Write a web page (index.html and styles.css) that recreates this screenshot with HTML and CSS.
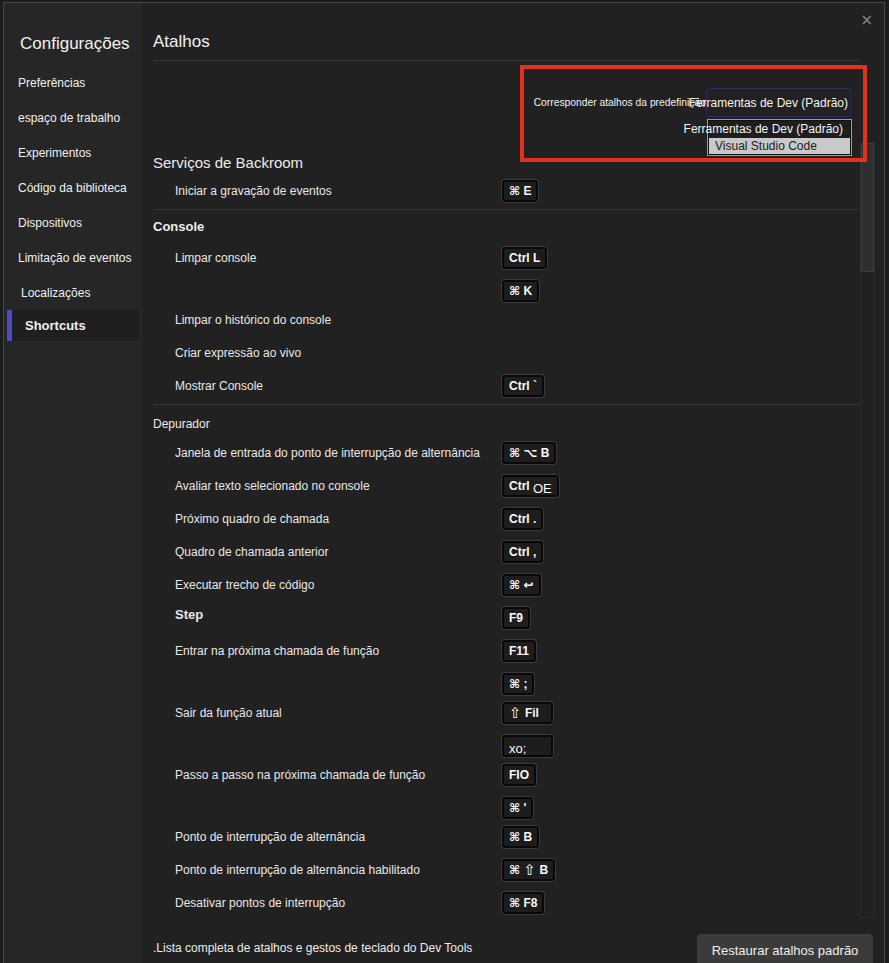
FILE: index.html
```html
<!DOCTYPE html>
<html lang="pt">
<head>
<meta charset="utf-8">
<title>Configurações - Atalhos</title>
<link rel="stylesheet" href="styles.css">
</head>
<body>
<div class="frame">
  <aside class="sidebar">
    <h1 class="side-title">Configurações</h1>
    <nav class="side-nav">
      <a class="side-item">Preferências</a>
      <a class="side-item">espaço de trabalho</a>
      <a class="side-item">Experimentos</a>
      <a class="side-item">Código da biblioteca</a>
      <a class="side-item">Dispositivos</a>
      <a class="side-item">Limitação de eventos</a>
      <a class="side-item shifted">Localizações</a>
      <a class="side-item active">Shortcuts</a>
    </nav>
  </aside>

  <main class="main">
    <button class="close" aria-label="Fechar">×</button>
    <header class="main-header"><h2 class="main-title">Atalhos</h2></header>

    <div class="body">
      <div class="scroll">
        <div class="preset">
          <span class="preset-label">Corresponder atalhos da predefinição</span>
          <div class="select">
            <span class="select-value">Ferramentas de Dev (Padrão)</span>
            <ul class="options">
              <li class="option current"><span>Ferramentas de Dev (Padrão)</span></li>
              <li class="option hover">Visual Studio Code</li>
            </ul>
          </div>
        </div>

        <section class="group">
          <h3 class="group-title backroom">Serviços de Backroom</h3>
          <div class="item"><span class="label">Iniciar a gravação de eventos</span><div class="keys"><kbd class="key">⌘ E</kbd></div></div>
        </section>

        <section class="group">
          <h3 class="group-title console">Console</h3>
          <div class="item multi"><span class="label">Limpar console</span><div class="keys"><kbd class="key">Ctrl L</kbd><kbd class="key">⌘ K</kbd></div></div>
          <div class="item"><span class="label">Limpar o histórico do console</span><div class="keys"></div></div>
          <div class="item"><span class="label">Criar expressão ao vivo</span><div class="keys"></div></div>
          <div class="item"><span class="label">Mostrar Console</span><div class="keys"><kbd class="key">Ctrl `</kbd></div></div>
        </section>

        <section class="group last">
          <h3 class="group-title debugger">Depurador</h3>
          <div class="item"><span class="label">Janela de entrada do ponto de interrupção de alternância</span><div class="keys"><kbd class="key">⌘ ⌥ B</kbd></div></div>
          <div class="item"><span class="label">Avaliar texto selecionado no console</span><div class="keys"><kbd class="key">Ctrl <span class="odd">OE</span></kbd></div></div>
          <div class="item"><span class="label">Próximo quadro de chamada</span><div class="keys"><kbd class="key">Ctrl .</kbd></div></div>
          <div class="item"><span class="label">Quadro de chamada anterior</span><div class="keys"><kbd class="key">Ctrl ,</kbd></div></div>
          <div class="item"><span class="label">Executar trecho de código</span><div class="keys"><kbd class="key">⌘ ↩</kbd></div></div>
          <div class="item"><span class="label strong">Step</span><div class="keys"><kbd class="key">F9</kbd></div></div>
          <div class="item multi"><span class="label">Entrar na próxima chamada de função</span><div class="keys"><kbd class="key">F11</kbd><kbd class="key">⌘ ;</kbd></div></div>
          <div class="item multi"><span class="label">Sair da função atual</span><div class="keys"><kbd class="key wide"><span class="sym">⇧</span> Fil</kbd><kbd class="key wide"><span class="low">xo;</span></kbd></div></div>
          <div class="item multi"><span class="label">Passo a passo na próxima chamada de função</span><div class="keys"><kbd class="key">FIO</kbd><kbd class="key">⌘ '</kbd></div></div>
          <div class="item"><span class="label">Ponto de interrupção de alternância</span><div class="keys"><kbd class="key">⌘ B</kbd></div></div>
          <div class="item"><span class="label">Ponto de interrupção de alternância habilitado</span><div class="keys"><kbd class="key">⌘ <span class="sym">⇧</span> B</kbd></div></div>
          <div class="item"><span class="label">Desativar pontos de interrupção</span><div class="keys"><kbd class="key">⌘ F8</kbd></div></div>
        </section>
      </div>
      <div class="scrollbar"><div class="thumb"></div></div>
    </div>

    <footer class="footer">
      <span class="footer-link">.Lista completa de atalhos e gestos de teclado do Dev Tools</span>
      <button class="restore">Restaurar atalhos padrão</button>
    </footer>

    <div class="annotation"></div>
  </main>
</div>
</body>
</html>
```

FILE: styles.css
```css
html, body {
  margin: 0;
  height: 963px;
  overflow: hidden;
}

body {
  background: #1c1c1c;
  font-family: "Liberation Sans", Arial, "DejaVu Sans", sans-serif;
  color: #ececec;
}

.frame {
  display: flex;
  margin: 2px 4px 0 3px;
  border: 1px solid #484848;
  border-bottom: none;
  height: 1000px;
}

/* Sidebar */
.sidebar {
  width: 138px;
  flex: none;
  background: #262626;
}

.side-title {
  margin: 0;
  padding: 30px 0 0 16px;
  font-size: 17px;
  line-height: 22px;
  font-weight: normal;
  color: #f2f2f2;
}

.side-nav {
  display: flex;
  flex-direction: column;
  margin-top: 11px;
}

.side-item {
  display: block;
  height: 35px;
  line-height: 35px;
  padding-left: 14px;
  font-size: 12px;
  color: #f0f0f0;
  white-space: nowrap;
}

.side-item.shifted {
  padding-left: 17px;
}

.side-item.active {
  height: 31px;
  line-height: 31px;
  margin: -1px 3px 0;
  padding-left: 13px;
  border-left: 5px solid #4b4bc6;
  background: #1f1f1f;
  font-size: 13px;
  font-weight: bold;
}

/* Main */
.main {
  position: relative;
  flex: 1;
  background: #212121;
  padding: 0 9px 0 11px;
  display: flex;
  flex-direction: column;
}

.close {
  position: absolute;
  top: 9px;
  right: 11px;
  background: none;
  border: none;
  padding: 0;
  color: #8a8a8a;
  font-size: 15px;
  font-family: "DejaVu Sans", sans-serif;
  line-height: 16px;
}

.main-header {
  margin-right: 15px;
  border-bottom: 1px solid #333;
  padding: 28px 0 7px;
}

.main-title {
  margin: 0;
  font-size: 17px;
  line-height: 22px;
  font-weight: normal;
  color: #f2f2f2;
}

.body {
  display: flex;
}

.scroll {
  flex: 1;
}

.scrollbar {
  width: 15px;
  height: 776px;
  margin-top: 81px;
  box-sizing: border-box;
  border-left: 1px solid #2c2c2c;
  border-right: 1px solid #2c2c2c;
  border-bottom: 1px solid #2c2c2c;
}

.thumb {
  height: 129px;
  margin-top: 1px;
  background: #2e2e2e;
  border: 1px solid #3d3d3d;
  box-sizing: border-box;
}

/* Preset selector */
.preset {
  height: 90px;
  box-sizing: border-box;
  display: flex;
  justify-content: flex-end;
  align-items: flex-start;
  padding: 27px 9px 0 0;
}

.preset-label {
  font-size: 10.3px;
  line-height: 29px;
  color: #f0f0f0;
  white-space: nowrap;
}

.select {
  position: relative;
  width: 145px;
  height: 29px;
  box-sizing: border-box;
  border: 1px solid #2b2b62;
  border-radius: 3px;
  display: flex;
  justify-content: flex-end;
  align-items: center;
  padding-right: 2px;
}

.select-value {
  white-space: nowrap;
  font-size: 12px;
  color: #f4f4f4;
}

.options {
  position: absolute;
  top: 30px;
  left: 0;
  width: 145px;
  box-sizing: border-box;
  margin: 0;
  padding: 1px;
  list-style: none;
  border: 1px solid #9a9a9a;
  background: #111;
}

.option {
  height: 17px;
  line-height: 17px;
  white-space: nowrap;
}

.option.current {
  display: flex;
  justify-content: flex-end;
  padding-right: 7px;
  background: #1e1e1e;
  font-size: 12px;
  color: #f4f4f4;
}

.option.hover {
  background: #c9c9c9;
  color: #1c1c1c;
  font-size: 12px;
  padding-left: 6px;
  height: 16px;
  line-height: 16px;
}

/* Groups */
.group {
  border-bottom: 1px solid #333;
  padding-bottom: 1px;
}

.group.last {
  border-bottom: none;
}

.group-title {
  margin: 0;
  font-weight: normal;
  color: #ececec;
}

.group-title.backroom {
  font-size: 15px;
  line-height: 24px;
}

.group-title.console {
  font-size: 13px;
  font-weight: bold;
  line-height: 20px;
  padding: 7px 0 5px;
}

.group-title.debugger {
  font-size: 12px;
  line-height: 18px;
  padding: 10px 0 4px;
}

.item {
  display: grid;
  grid-template-columns: 327px auto;
  padding: 5px 0 6px 22px;
  align-items: start;
}

.item.multi {
  padding-bottom: 2px;
}

.label {
  font-size: 12px;
  line-height: 22px;
  color: #e8e8e8;
  white-space: nowrap;
}

.label.strong {
  font-size: 13px;
  font-weight: bold;
  line-height: 16px;
}

.keys {
  display: flex;
  flex-direction: column;
  align-items: flex-start;
  gap: 11px;
}

.key {
  display: inline-flex;
  align-items: center;
  height: 22px;
  box-sizing: border-box;
  padding: 0 5px;
  border: 2px solid #080808;
  border-radius: 3px;
  box-shadow: 0 0 0 1px #3a3a3a;
  background: #1d1d1d;
  color: #fafafa;
  font-family: "Liberation Sans", "DejaVu Sans", sans-serif;
  font-size: 12px;
  font-weight: bold;
  white-space: pre;
}

.key.wide {
  min-width: 51px;
}

.key .sym {
  font-family: "DejaVu Sans", sans-serif;
  font-weight: normal;
  font-size: 15px;
  line-height: 14px;
}

.key .odd {
  font-weight: normal;
  font-size: 13px;
  margin-top: 4px;
}

.key .low {
  font-weight: normal;
  font-size: 13px;
  margin-top: 5px;
}

/* Footer */
.footer {
  display: flex;
  justify-content: space-between;
  align-items: center;
  padding: 13px 2px 0 0;
}

.footer-link {
  font-size: 12px;
  color: #ececec;
  margin-top: -4px;
}

.restore {
  height: 32px;
  width: 176px;
  border: none;
  border-radius: 4px;
  background: #3b3b3b;
  color: #f0f0f0;
  font-family: "Liberation Sans", Arial, sans-serif;
  font-size: 13px;
  padding: 0;
}

/* Review annotation overlay */
.annotation {
  position: absolute;
  left: 378px;
  top: 62px;
  width: 347px;
  height: 97px;
  box-sizing: border-box;
  border: 4px solid #e0321e;
  pointer-events: none;
}
```
